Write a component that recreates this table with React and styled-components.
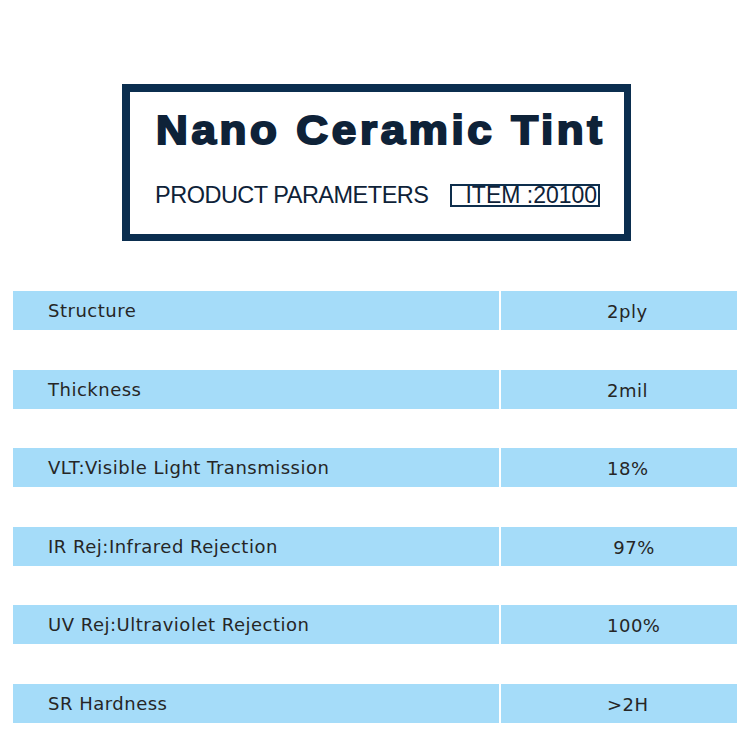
import React from "react";
import styled, { createGlobalStyle } from "styled-components";

const rows = [
  { name: "Structure", value: "2ply" },
  { name: "Thickness", value: "2mil" },
  { name: "VLT:Visible Light Transmission", value: "18%" },
  { name: "IR Rej:Infrared Rejection", value: " 97%" },
  { name: "UV Rej:Ultraviolet Rejection", value: "100%" },
  { name: "SR Hardness", value: ">2H" },
];

export default function App() {
  return (
    <Page>
      <GlobalStyle />
      <Header>
        <Title>Nano Ceramic Tint</Title>
        <SubRow>
          <SubTitle>PRODUCT PARAMETERS</SubTitle>
          <ItemBox>ITEM :20100</ItemBox>
        </SubRow>
      </Header>
      <Table>
        {rows.map((item) => (
          <Row key={item.name}>
            <NameCell>{item.name}</NameCell>
            <ValueCell>{item.value}</ValueCell>
          </Row>
        ))}
      </Table>
    </Page>
  );
}

const GlobalStyle = createGlobalStyle`
  body {
    margin: 0;
    background: #ffffff;
    font-family: "Liberation Sans", Arial, sans-serif;
  }
`;

const Page = styled.div`
  width: 750px;
  height: 749px;
  background: #ffffff;
  overflow: hidden;
`;

const Header = styled.div`
  box-sizing: border-box;
  width: 509px;
  height: 157px;
  margin: 84px 0 0 122px;
  border: 8px solid #0b2e4f;
  border-right-width: 7px;
  border-bottom-width: 7px;
  padding: 18px 0 0 26px;
  display: flex;
  flex-direction: column;
  align-items: flex-start;
`;

const Title = styled.h1`
  margin: 0;
  font-family: "Liberation Sans", Arial, sans-serif;
  font-weight: 700;
  font-size: 40px;
  line-height: 40px;
  letter-spacing: 3.3px;
  color: #0e2238;
  -webkit-text-stroke: 2px #0e2238;
  white-space: nowrap;
  transform: scaleX(1.1);
  transform-origin: left center;
`;

const SubRow = styled.div`
  display: flex;
  align-items: center;
  margin-top: 34px;
  margin-left: -1px;
`;

const SubTitle = styled.span`
  font-size: 23.5px;
  line-height: 23px;
  letter-spacing: -0.5px;
  color: #0e2238;
  white-space: nowrap;
`;

const ItemBox = styled.span`
  box-sizing: border-box;
  height: 23px;
  margin-left: 22px;
  border: 2px solid #0e2e4c;
  padding: 0 1px 0 13px;
  font-size: 23px;
  line-height: 19px;
  color: #0e2238;
  white-space: nowrap;
`;

const Table = styled.div`
  display: flex;
  flex-direction: column;
  gap: 39.6px;
  margin: 50px 13px 0 13px;
`;

const Row = styled.div`
  display: grid;
  grid-template-columns: 486px 1fr;
  column-gap: 2px;
  height: 39px;
`;

const Cell = styled.div`
  background: #a5dcf9;
  display: flex;
  align-items: center;
  font-family: "DejaVu Sans", "Liberation Sans", sans-serif;
  font-size: 18px;
  letter-spacing: 0.5px;
  color: #262626;
  white-space: pre;
`;

const NameCell = styled(Cell)`
  padding-left: 35px;
`;

const ValueCell = styled(Cell)`
  padding-left: 106px;
  padding-top: 2px;
`;
